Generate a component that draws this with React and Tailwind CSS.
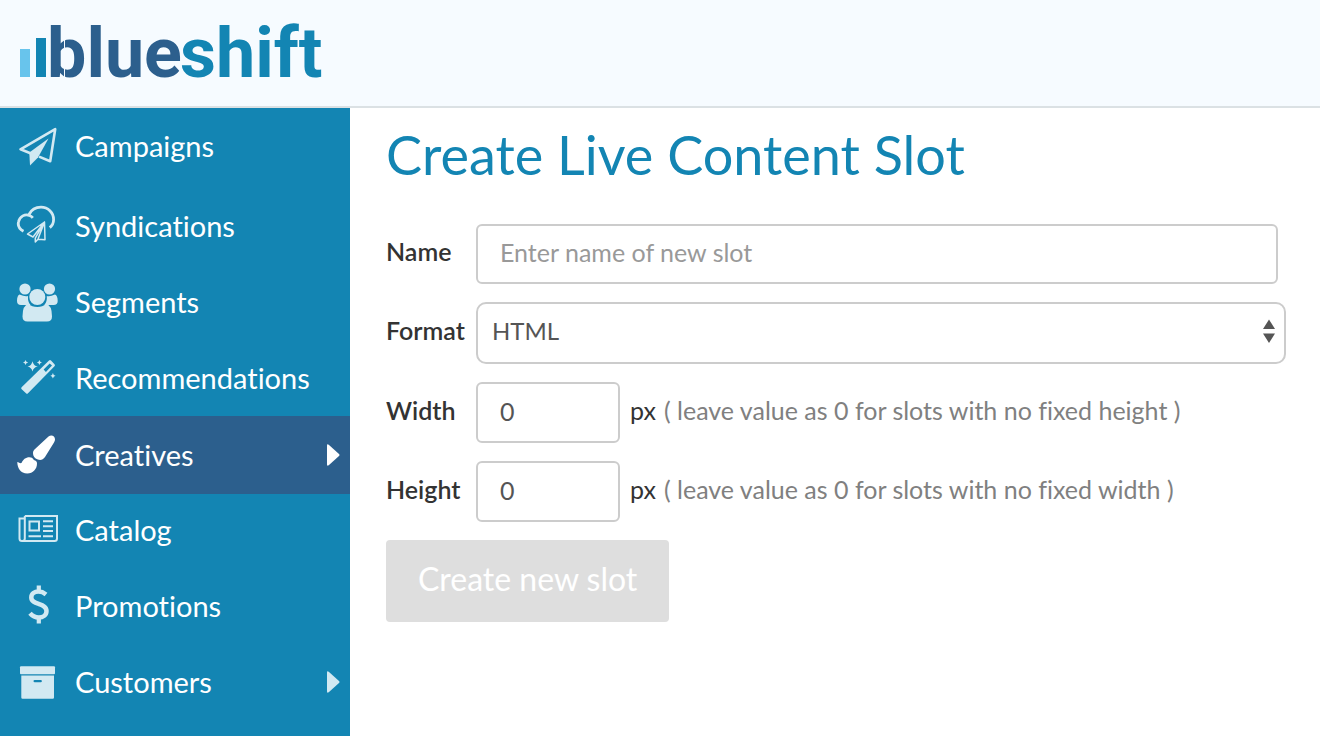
import { useState } from "react";

function Logo() {
  return (
    <svg viewBox="0 0 320 88" className="h-[88px] w-80" role="img" aria-label="blueshift">
      <rect x="2" y="40" width="10" height="28" fill="#68c4ec" />
      <rect x="18" y="29" width="10" height="39" fill="#1385b3" />
      <text y="68" fontFamily="Roboto, Arial, sans-serif" fontWeight="700" fontSize="70">
        <tspan x="29" fill="#2c5f8d">blue</tspan>
        <tspan x="162" fill="#1385b3">shift</tspan>
      </text>
      <rect x="46" y="28" width="1" height="42" fill="#f6fbff" />
    </svg>
  );
}

function PlaneIcon() {
  return (
    <svg viewBox="16 125 42 42" className="size-[42px]" fill="none" aria-hidden="true">
      <path d="M31 153.500L20.500 149.300L55.200 129.200L50.200 161.200L39 156.600" stroke="currentColor" strokeWidth="2.600" strokeLinejoin="round" />
      <path d="M48.500 138.500L29.300 152.500L30 165.500L38 157.500Z" fill="currentColor" />
    </svg>
  );
}

function CloudPlaneIcon() {
  return (
    <svg viewBox="16 205 42 42" className="size-[42px]" fill="none" stroke="currentColor" aria-hidden="true">
      <path d="M23.500 231.200C19.500 229 17.500 225.500 18.600 221.500C19.800 216.500 25 213.500 29.500 215.500C31 216.100 32 216.800 32.800 217.800M29 214.500C31.500 209.500 36 207.200 41 207.200C48 207.200 53.600 212.500 53.600 219.500C53.600 222.500 52.300 225.500 49.800 227.600" strokeWidth="2.800" />
      <path d="M44.500 222L27.500 234L33 237L44.500 222L35.300 238.200V242L38 239.200L45 239.800L44.500 222L38 239" strokeWidth="1.500" strokeLinejoin="round" />
    </svg>
  );
}

function PeopleIcon() {
  return (
    <svg viewBox="16 281 42 42" className="size-[42px]" fill="currentColor" aria-hidden="true">
      <circle cx="25" cy="289" r="5.600" />
      <circle cx="49.500" cy="289" r="5.600" />
      <path d="M19.500 294.500Q25 297 28 296Q27.500 302 30.500 305H21Q17 305 17 301Q17 295.500 19.500 294.500ZM55 294.500Q50 297 46.800 296Q47.300 302 44.300 305H53.500Q57.700 305 57.700 301Q57.700 295.500 55 294.500Z" />
      <circle cx="37.300" cy="297" r="8" />
      <path d="M28.500 304Q32 307 37.300 307Q42.600 307 46 304Q52 305 52 316.500Q52 321.500 47 321.500H27.500Q22.500 321.500 22.500 316.500Q22.500 305 28.500 304Z" />
    </svg>
  );
}

function WandIcon() {
  return (
    <svg viewBox="16 357 42 42" className="size-[42px]" fill="currentColor" aria-hidden="true">
      <path fillRule="evenodd" d="M49 360.500Q50 359.600 51 360.500L54.500 364.200Q55.500 365.200 54.500 366.200L28 393.300Q27 394.300 26 393.300L21.700 389.300Q20.600 388.300 21.600 387.300ZM49.700 363.400L43.600 369.600L45.900 371.900L52 365.500Z" />
      <path d="M32.500 361.300Q33.500 366 37.800 366.500Q33.500 367.300 32.500 371.500Q31.500 367.300 27.500 366.500Q31.500 366 32.500 361.300ZM25.500 360Q26 362.200 28.200 362.600Q26 363 25.500 365Q25 363 23 362.600Q25 362.200 25.500 360ZM39.400 360Q39.900 362.200 42 362.600Q39.900 363 39.400 365Q38.900 363 36.900 362.600Q38.900 362.200 39.400 360ZM52.900 373Q53.400 375.400 55.500 375.800Q53.400 376.200 52.900 378.500Q52.400 376.200 50.400 375.800Q52.400 375.400 52.900 373Z" />
    </svg>
  );
}

function BrushIcon() {
  return (
    <svg viewBox="16 434 42 42" className="size-[42px]" fill="currentColor" aria-hidden="true">
      <path d="M48.500 436.500C51 434.300 55 435.500 55 439.200C55 440.500 54.500 441.500 54 442.500L45 457C43 459.900 40.500 460.500 37.800 459.500C34.500 458.300 33 456 33 453.200C33 451.500 33.500 450.500 35 449Z" />
      <path d="M17.300 462C19 462.500 20 463.500 21.500 463C23 459.500 25.500 457.200 29.500 457.200C31.500 457.200 32.500 458 33.500 459.500C34.500 460.800 37 460.500 37 463.500C37 469 33 473.500 27.300 473.500C20.500 473.500 17.300 468 17.300 462Z" />
    </svg>
  );
}

function NewspaperIcon() {
  return (
    <svg viewBox="16 509 42 42" className="size-[42px]" fill="none" stroke="currentColor" strokeWidth="2" aria-hidden="true">
      <path d="M24.800 516H57V538.500Q57 541 54.500 541H22Q19.500 541 19.500 538.500V518.500H24.500M24.800 516V538.500Q24.800 541 22.200 541" />
      <path d="M29.500 521.500H39V530.500H29.500ZM43 521.200H53M43 526.200H53M43 531H53M43 536.200H53M28.500 536.200H41" />
    </svg>
  );
}

function DollarIcon() {
  return (
    <svg viewBox="16 585 42 42" className="size-[42px]" fill="none" stroke="currentColor" aria-hidden="true">
      <path d="M46 594.500C43.500 592.500 41.500 591.600 38.500 591.600C34.500 591.600 31.300 593.700 31.300 597.500C31.300 601.500 35 602.700 38.800 604C42.500 605.300 46.500 606.500 46.500 611C46.500 615 43 617.500 38.800 617.500C35 617.500 32.300 616 30 613.300" strokeWidth="4.500" />
      <path d="M38.800 585.500V592M38.800 617V623.600" strokeWidth="4.200" />
    </svg>
  );
}

function BoxIcon() {
  return (
    <svg viewBox="16 661 42 42" className="size-[42px]" fill="currentColor" aria-hidden="true">
      <rect x="20" y="666.300" width="35" height="8" rx="1" />
      <path fillRule="evenodd" d="M21.300 675.600H54V697.500Q54 698.700 52.800 698.700H22.500Q21.300 698.700 21.300 697.500ZM34.700 679.900A1.200 1.200 0 0 0 34.700 682.300H40.700A1.200 1.200 0 0 0 40.700 679.900Z" />
    </svg>
  );
}

function Caret() {
  return (
    <svg viewBox="0 0 14 22" className="h-[22px] w-3.5" fill="currentColor" aria-hidden="true">
      <path d="M1 1.500Q1 -0.500 3 1L13 10Q14 11 13 12L3 21Q1 22.500 1 20.500Z" />
    </svg>
  );
}

const items = [
  { label: "Campaigns", Icon: PlaneIcon, size: "mb-1 h-19" },
  { label: "Syndications", Icon: CloudPlaneIcon, size: "h-19" },
  { label: "Segments", Icon: PeopleIcon, size: "h-19" },
  { label: "Recommendations", Icon: WandIcon, size: "h-19" },
  { label: "Creatives", Icon: BrushIcon, size: "-mb-0.5 h-[78px]", active: true, caret: true },
  { label: "Catalog", Icon: NewspaperIcon, size: "h-19" },
  { label: "Promotions", Icon: DollarIcon, size: "h-19" },
  { label: "Customers", Icon: BoxIcon, size: "h-19", caret: true },
];

function Sidebar() {
  return (
    <nav className="w-[350px] shrink-0 bg-[#1385b3]">
      <ul>
        {items.map(({ label, Icon, size, active, caret }) => (
          <li key={label}>
            <a
              href="#"
              aria-current={active ? "page" : undefined}
              className={`flex items-center gap-[17px] pr-2.5 pl-4 ${size} ${active ? "bg-[#2c5f8d] text-white" : "text-[#d2e9f2]"}`}
            >
              <Icon />
              <span className="flex-1 text-[29px] leading-9 text-white">{label}</span>
              {caret && <Caret />}
            </a>
          </li>
        ))}
      </ul>
    </nav>
  );
}

function SizeField({ id, label, hint, value, onChange }) {
  return (
    <div className="flex items-center">
      <label htmlFor={id} className="w-[90px] shrink-0 pb-1.5 font-semibold">{label}</label>
      <input
        id={id}
        type="text"
        inputMode="numeric"
        value={value}
        onChange={(e) => onChange(e.target.value)}
        className="h-[61px] w-36 rounded-md border-2 border-[#cccccc] px-[22px] pb-1 text-[#555555]"
      />
      <span className="ml-2.5 pb-1.5">px</span>
      <span className="ml-2 pb-1.5 text-[#808080]">{hint}</span>
    </div>
  );
}

export default function App() {
  const [width, setWidth] = useState("0");
  const [height, setHeight] = useState("0");
  return (
    <div className="flex min-h-screen flex-col bg-white font-[Lato,sans-serif] text-[#333333] [font-variant-ligatures:none]">
      <header className="flex h-[108px] items-center border-b-2 border-[#dbe1e4] bg-[#f6fbff] px-[18px]">
        <Logo />
      </header>
      <div className="flex flex-1">
        <Sidebar />
        <main className="min-w-0 flex-1 pt-4 pr-[34px] pl-9">
          <h1 className="text-[54px] leading-[62px] text-[#1385b3]">Create Live Content Slot</h1>
          <form className="mt-[38px] flex flex-col gap-[18px] text-[25px] leading-8">
            <div className="flex items-center pr-2">
              <label htmlFor="name" className="w-[90px] shrink-0 pb-1.5 font-semibold">Name</label>
              <input
                id="name"
                type="text"
                placeholder="Enter name of new slot"
                className="h-[60px] min-w-0 flex-1 rounded-md border-2 border-[#cccccc] px-[22px] pb-1 placeholder:text-[#999999]"
              />
            </div>
            <div className="flex items-center">
              <label htmlFor="format" className="w-[90px] shrink-0 pb-1.5 font-semibold">Format</label>
              <div className="relative min-w-0 flex-1">
                <select
                  id="format"
                  className="block h-[62px] w-full appearance-none rounded-[10px] border-2 border-[#cccccc] bg-white px-3.5 pb-1 text-2xl text-[#555555]"
                >
                  <option>HTML</option>
                </select>
                <svg viewBox="0 0 12 24" className="pointer-events-none absolute top-[17px] right-[11px] h-6 w-3" fill="#555555" aria-hidden="true">
                  <path d="M0 10L6 0.500L12 10ZM0 14.500H12L6 24Z" />
                </svg>
              </div>
            </div>
            <SizeField id="width" label="Width" hint="( leave value as 0 for slots with no fixed height )" value={width} onChange={setWidth} />
            <SizeField id="height" label="Height" hint="( leave value as 0 for slots with no fixed width )" value={height} onChange={setHeight} />
            <button type="button" disabled className="self-start rounded bg-[#dedede] px-8 pt-[18px] pb-[22px] text-[32px] leading-[42px] text-white">
              Create new slot
            </button>
          </form>
        </main>
      </div>
    </div>
  );
}
